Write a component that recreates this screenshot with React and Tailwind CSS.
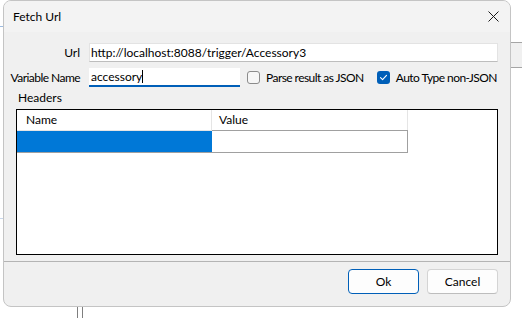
import React from 'react';

function CheckBox({ checked }) {
    return checked ? (
        <span className="w-[13px] h-[13px] rounded-[3px] bg-[#005fb8] flex items-center justify-center shrink-0">
            <svg width="9" height="9" viewBox="0 0 9 9" fill="none">
                <path d="M1.5 4.7 L3.6 6.7 L7.5 2.3" stroke="white" strokeWidth="1.1" strokeLinecap="round" strokeLinejoin="round" />
            </svg>
        </span>
    ) : (
        <span className="w-[13px] h-[13px] rounded-[3px] border border-[#8b8b8b] bg-[#f6f6f6] shrink-0" />
    );
}

export default function App() {
    return (
        <div className="w-[522px] h-[318px] bg-white relative overflow-hidden text-[12px] text-black font-['Lato','Liberation_Sans',sans-serif]">
            {/* desktop behind the dialog */}
            <div className="absolute left-0 top-[26px] w-[3px] h-px bg-[#9dbbe0]" />
            <div className="absolute left-0 top-[218px] w-[3px] h-px bg-[#c9d7ea]" />
            <div className="absolute left-[77px] top-0 w-px h-[2px] bg-[#8a8a8a]" />
            <div className="absolute left-[82px] top-0 w-px h-[2px] bg-[#8a8a8a]" />
            <div className="absolute left-[77px] top-[306px] w-px h-[12px] bg-[#7e7e7e]" />
            <div className="absolute left-[82px] top-[306px] w-px h-[12px] bg-[#7e7e7e]" />
            <div className="absolute left-[511px] top-[42px] w-[11px] h-[26px] bg-[#f0f0f0] border-t border-b border-[#a5a5a5]" />

            {/* dialog window */}
            <div className="absolute left-[3px] top-0 w-[508px] h-[307px] rounded-[8px] border border-[#c4c4c4] bg-[#f0f0f0] flex flex-col overflow-hidden">
                <div className="h-[31px] shrink-0 bg-[#f3f3f3] flex items-center justify-between pl-[9px] pr-[11px]">
                    <span className="text-[12px]">Fetch Url</span>
                    <svg width="11" height="11" viewBox="0 0 11 11">
                        <path d="M0.5 0.5 L10.5 10.5 M10.5 0.5 L0.5 10.5" stroke="#1a1a1a" strokeWidth="1" />
                    </svg>
                </div>

                <div className="flex-1 flex flex-col px-[12px]">
                    <div className="flex items-center mt-[11px] h-[19px]">
                        <span className="w-[64px] shrink-0 flex justify-end whitespace-nowrap">Url</span>
                        <div className="ml-[9px] w-[409px] shrink-0 h-[19px] bg-white border border-[#e3e3e3] border-b-[#bdbdbd] flex items-center pl-[1px] whitespace-nowrap">
                            http://localhost:8088/trigger/Accessory3
                        </div>
                    </div>

                    <div className="flex items-center mt-[6px] h-[19px] whitespace-nowrap tracking-[-0.55px]">
                        <span className="w-[64px] shrink-0 flex justify-end">Variable Name</span>
                        <div className="ml-[9px] w-[151px] shrink-0 h-[19px] bg-white border-b-2 border-[#005fb8] flex items-center pl-[2px] tracking-normal">
                            accessory
                            <span className="w-px h-[13px] bg-black" />
                        </div>
                        <div className="ml-[7px] shrink-0 flex items-center gap-[6px]">
                            <CheckBox checked={false} />
                            <span>Parse result as JSON</span>
                        </div>
                        <div className="ml-[13px] shrink-0 flex items-center gap-[6px]">
                            <CheckBox checked={true} />
                            <span>Auto Type non-JSON</span>
                        </div>
                    </div>

                    <div className="mt-[4px] pl-[2px] leading-[14px]">Headers</div>

                    <div className="mt-[4px] w-[482px] h-[146px] border border-black bg-white">
                        <div className="flex h-[21px]">
                            <div className="w-[195px] border-r border-b border-[#e5e5e5] pl-[9px] flex items-center">Name</div>
                            <div className="w-[196px] border-r border-b border-[#e5e5e5] pl-[7px] flex items-center">Value</div>
                        </div>
                        <div className="flex h-[22px]">
                            <div className="w-[195px] bg-[#0078d7] border-b border-[#a0a0a0]" />
                            <div className="w-[196px] bg-white border-r border-b border-t border-[#a0a0a0] -mt-px" />
                        </div>
                    </div>
                </div>

                <div className="h-[45px] shrink-0 border-t border-[#b4b4b4] flex justify-end items-start gap-[8px] pt-[7px] pr-[12px]">
                    <button className="w-[71px] h-[25px] rounded-[4px] border border-[#005fb8] bg-[#fdfdfd] text-[12px]">Ok</button>
                    <button className="w-[71px] h-[25px] rounded-[4px] border border-[#d4d4d4] border-b-[#bdbdbd] bg-[#fdfdfd] text-[12px]">Cancel</button>
                </div>
            </div>
        </div>
    );
}
